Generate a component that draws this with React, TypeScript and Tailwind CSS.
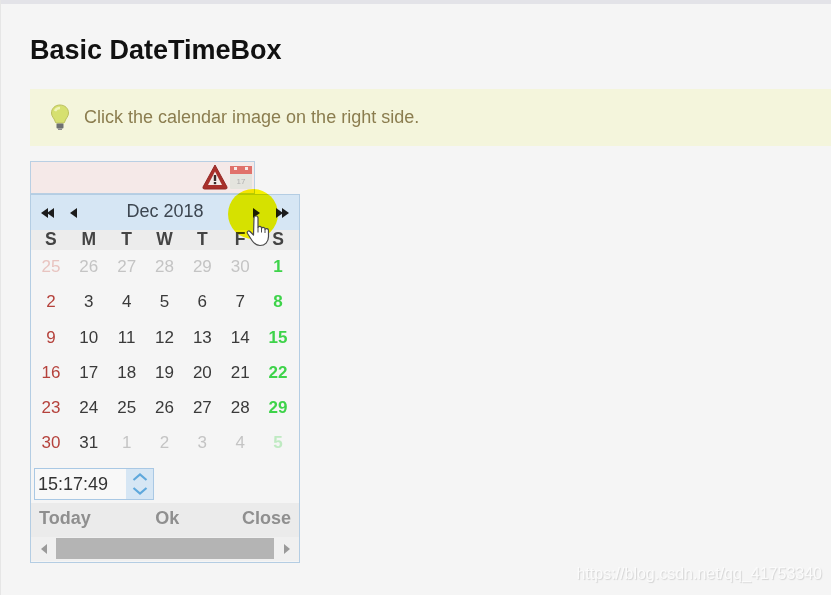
const weekDays = ['S', 'M', 'T', 'W', 'T', 'F', 'S'];

// [day, in current month]
const weeks: [number, boolean][][] = [
  [[25, false], [26, false], [27, false], [28, false], [29, false], [30, false], [1, true]],
  [[2, true], [3, true], [4, true], [5, true], [6, true], [7, true], [8, true]],
  [[9, true], [10, true], [11, true], [12, true], [13, true], [14, true], [15, true]],
  [[16, true], [17, true], [18, true], [19, true], [20, true], [21, true], [22, true]],
  [[23, true], [24, true], [25, true], [26, true], [27, true], [28, true], [29, true]],
  [[30, true], [31, true], [1, false], [2, false], [3, false], [4, false], [5, false]],
];

function dayColor(col: number, current: boolean) {
  if (col === 0) return current ? 'text-[#b5423c]' : 'text-[#e8c4c0]';
  if (col === 6) return current ? 'text-[#3ed34a]' : 'text-[#bfeac2]';
  return current ? 'text-[#3a3a3a]' : 'text-[#c4c4c4]';
}

function Bulb() {
  return (
    <svg width="20" height="27" viewBox="0 0 20 27">
      <path d="M10 1C5 1 1.500 4.500 1.500 9c0 3.500 2.500 5 3.500 8 .3 1 .5 1.500 1 2h8c.5-.5.7-1 1-2 1-3 3.500-4.500 3.500-8C18.500 4.500 15 1 10 1z" fill="#d6e070" stroke="#bcc060" strokeWidth="1" />
      <path d="M5 7c1-2 3-3 5-3" stroke="#f0f4b8" strokeWidth="2.500" fill="none" />
      <rect x="6.500" y="19.500" width="7" height="5" rx="1" fill="#6d7070" />
      <rect x="8" y="24.500" width="4" height="1.500" fill="#8c8c8c" />
    </svg>
  );
}

function WarningIcon() {
  return (
    <svg width="26" height="26" viewBox="0 0 26 26" className="mb-[2px]">
      <path d="M13 1 L25 23 Q25.500 25 23.500 25 H2.500 Q.5 25 1 23 Z" fill="#a8302b" stroke="#952825" strokeWidth="1" strokeLinejoin="round" />
      <path d="M13 7.500 L20 21 H6 Z" fill="#f3ebe8" />
      <rect x="11.800" y="11" width="2.400" height="6" fill="#3a2a2a" />
      <rect x="11.800" y="18" width="2.400" height="2.200" fill="#3a2a2a" />
    </svg>
  );
}

function CalendarIcon() {
  return (
    <svg width="22" height="25" viewBox="0 0 22 25">
      <rect x="0" y="1" width="22" height="23" rx="1" fill="#e4e4de" />
      <rect x="0" y="1" width="22" height="8" fill="#e0716b" />
      <rect x="4" y="2" width="3" height="3" fill="#f6ecea" />
      <rect x="15" y="2" width="3" height="3" fill="#f6ecea" />
      <text x="11" y="18.500" textAnchor="middle" fontSize="8" fill="#b0b0b0" fontFamily="'Liberation Sans', sans-serif">17</text>
    </svg>
  );
}

function NavArrow({ dir, double }: { dir: 'left' | 'right'; double?: boolean }) {
  const one = dir === 'left' ? 'M7 0 L0 5 L7 10 Z' : 'M0 0 L7 5 L0 10 Z';
  return (
    <svg width={double ? 13 : 7} height="10" viewBox={double ? '0 0 13 10' : '0 0 7 10'} fill="#1c1c1c">
      <path d={one} />
      {double && <path d={one} transform="translate(6 0)" />}
    </svg>
  );
}

function HandCursor({ className }: { className: string }) {
  return (
    <svg width="24" height="33" viewBox="0 0 24 33" className={className} fill="#ffffff" stroke="#4a4a4a" strokeWidth="1.200" strokeLinejoin="round">
      <path d="M8 3a2 2 0 0 1 4 0v9.500a2 2 0 0 1 3.500 0v.8a2 2 0 0 1 3.500.2v1a1.900 1.900 0 0 1 3.500 1v6c0 5.500-3.500 9-8.500 9-4 0-6-2-8-5l-4.500-7c-1-1.700 1-3.300 2.500-2l3.500 3.500z" />
      <path d="M12 12.500v5M15.500 12.500v5M19 14.500v3.500" fill="none" strokeWidth="1" />
    </svg>
  );
}

export default function App() {
  return (
    <div className="relative w-[831px] h-[595px] overflow-hidden bg-[#f5f5f5] border-l border-[#e6e6e6] font-['Liberation_Sans',Arial,sans-serif]">
      <div className="blur-[0.6px]">
        <div className="h-1 bg-[#e3e3e8] -ml-px" />

        <div className="pl-[29px]">
          <h1 className="mt-[29px] h-[34px] leading-[35px] text-[27px] font-bold text-[#111]">Basic DateTimeBox</h1>

          {/* tip */}
          <div className="mt-[22px] h-[57px] flex items-center bg-[#f4f5dc] pl-5">
            <Bulb />
            <span className="ml-[14px] pb-[1px] text-[18px] text-[#8b7d4f]">Click the calendar image on the right side.</span>
          </div>

          {/* input */}
          <div className="mt-[15px] w-[225px] h-[33px] flex items-center justify-end gap-[2px] bg-[#f5e9e8] border border-[#b9cfe3] pr-[2px]">
            <WarningIcon />
            <CalendarIcon />
          </div>

          {/* calendar panel */}
          <div className="w-[270px] h-[369px] bg-[#f5f5f5] border border-[#b4cde3]">
            <div className="h-[35px] flex items-center justify-between bg-[#d6e6f4] px-[10px]">
              <div className="flex items-center gap-[16px]">
                <NavArrow dir="left" double />
                <NavArrow dir="left" />
              </div>
              <span className="pb-[2px] text-[18px] text-[#3d4650]">Dec 2018</span>
              <div className="flex items-center gap-[16px]">
                <NavArrow dir="right" />
                <NavArrow dir="right" double />
              </div>
            </div>

            <div className="grid grid-cols-7 h-[20px] bg-[#ececec] pl-[1px] pr-[2px] pb-[2px] items-center text-center text-[17.500px] leading-[18px] font-bold text-[#444]">
              {weekDays.map((d, i) => (
                <span key={i}>{d}</span>
              ))}
            </div>

            <div className="grid grid-cols-7 pl-[1px] pr-[2px] text-center text-[17px]">
              {weeks.map((week, r) =>
                week.map(([day, current], c) => (
                  <span key={`${r}-${c}`} className={`h-[35.300px] leading-[33px] ${dayColor(c, current)} ${c === 6 ? 'font-bold' : ''}`}>
                    {day}
                  </span>
                ))
              )}
            </div>

            {/* time */}
            <div className="mt-[6px] ml-[3px] w-[120px] h-[32px] flex bg-[#f8f8f8] border border-[#a9c8e4]">
              <span className="flex-1 pl-[3px] leading-[30px] text-[18px] text-[#333]">15:17:49</span>
              <div className="w-[27px] flex flex-col items-center justify-center gap-[6px] bg-[#d6e6f4]">
                <svg width="16" height="8" viewBox="0 0 16 8" fill="none" stroke="#5fa8dc" strokeWidth="2.200"><path d="M1.500 7 L8 1.500 L14.500 7" /></svg>
                <svg width="16" height="8" viewBox="0 0 16 8" fill="none" stroke="#5fa8dc" strokeWidth="2.200"><path d="M1.500 1 L8 6.500 L14.500 1" /></svg>
              </div>
            </div>

            {/* footer */}
            <div className="mt-[3px] h-[34px] flex items-center justify-between bg-[#ebebeb] px-[8px] pb-[3px] text-[18px] font-bold text-[#8f8f8f]">
              <span>Today</span>
              <span className="ml-[2px]">Ok</span>
              <span>Close</span>
            </div>

            {/* scrollbar */}
            <div className="h-[24px] flex items-center bg-[#f0f0f0]">
              <div className="w-[25px] flex justify-center">
                <svg width="6" height="10" viewBox="0 0 6 10" fill="#9a9a9a"><path d="M6 0 L0 5 L6 10 Z" /></svg>
              </div>
              <div className="w-[218px] h-[21px] bg-[#b4b4b4]" />
              <div className="w-[25px] flex justify-center">
                <svg width="6" height="10" viewBox="0 0 6 10" fill="#9a9a9a"><path d="M0 0 L6 5 L0 10 Z" /></svg>
              </div>
            </div>
          </div>
        </div>
      </div>

      {/* mouse highlight and cursor */}
      <div className="absolute left-[227px] top-[189px] w-[50px] h-[50px] rounded-full bg-[#fffa00] mix-blend-multiply" />
      <HandCursor className="absolute left-[245px] top-[215px]" />

      {/* watermark */}
      <span className="absolute right-[9px] bottom-[9px] text-[16px] text-[#fbfbfb] [text-shadow:1px_1px_1px_#d4d4d4]">https://blog.csdn.net/qq_41753340</span>
    </div>
  );
}
